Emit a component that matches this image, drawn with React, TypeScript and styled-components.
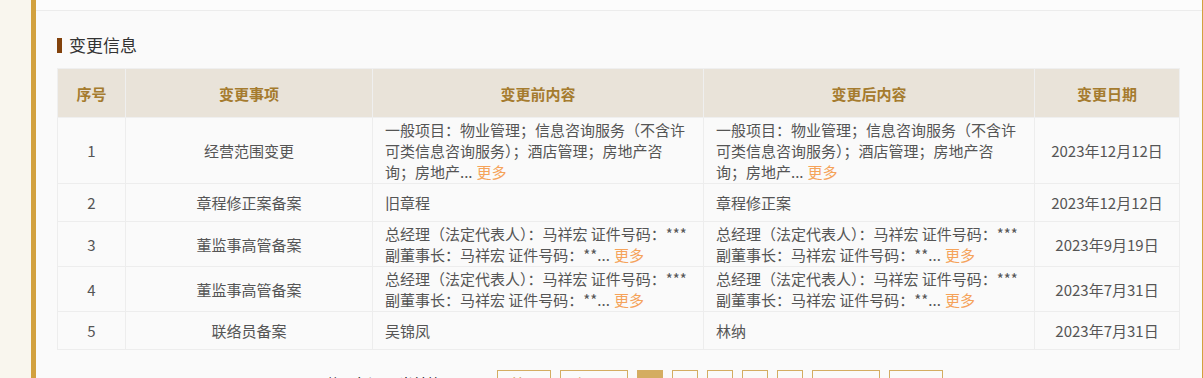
import React from 'react'
import styled, { createGlobalStyle } from 'styled-components'

const GlobalStyle = createGlobalStyle`
  html, body {
    margin: 0;
    padding: 0;
    background: #f9f6ee;
    font-family: "Noto Sans CJK SC", "Noto Sans", sans-serif;
  }
`

const Shell = styled.div`
  padding-left: 31px;
  height: 378px;
  overflow: hidden;
`

const Panel = styled.div`
  height: 100%;
  background: #fafafa;
  border-left: 5px solid #d2a13e;
  border-right: 1px solid #d2a13e;
`

const TopStrip = styled.div`
  height: 10px;
  background: #fcfcfc;
  border-bottom: 1px solid #ececec;
`

const Section = styled.div`
  padding: 26px 22px 0 21px;
`

const Title = styled.div`
  display: flex;
  align-items: center;
  gap: 7px;
  height: 16px;
  font-size: 17px;
  color: #333;
  line-height: 16px;
`

const TitleBar = styled.span`
  width: 5px;
  height: 15px;
  background: #82420c;
`

const Table = styled.table`
  width: 100%;
  margin-top: 15px;
  border-collapse: collapse;
  table-layout: fixed;
  font-size: 15px;
`

const Th = styled.th`
  height: 48px;
  padding: 0;
  background: #e9e3d9;
  border: 1px solid #efefef;
  color: #a57b2e;
  font-weight: bold;
  text-align: center;
`

const Td = styled.td<{ $left?: boolean }>`
  padding: 1px 12px;
  border: 1px solid #ededed;
  color: #555;
  line-height: 21px;
  text-align: ${(p) => (p.$left ? 'left' : 'center')};
  vertical-align: middle;
  height: 35px;
`

const Line = styled.div`
  white-space: nowrap;
`

const More = styled.a`
  color: #f5a35a;
  margin-left: 4px;
  cursor: pointer;
`

const Pager = styled.div`
  display: flex;
  align-items: center;
  justify-content: center;
  gap: 9px;
  margin-top: 20px;
  padding-left: 32px;
  font-size: 14px;
`

const PagerInfo = styled.span`
  color: #111;
  margin-right: 6px;
  white-space: nowrap;
`

const PageButton = styled.button<{ $active?: boolean; $wide?: boolean }>`
  height: 26px;
  min-width: 26px;
  padding: 0 ${(p) => (p.$wide ? '12px' : '0')};
  border: 1px solid #d4ad62;
  background: ${(p) => (p.$active ? '#d4ad62' : 'transparent')};
  color: ${(p) => (p.$active ? '#fff' : '#c9a055')};
  font: inherit;
  font-size: 14px;
  cursor: pointer;
`

interface ChangeRow {
  no: number
  item: string
  before: string[]
  after: string[]
  more?: boolean
  date: string
}

const scopeText = [
  '一般项目：物业管理；信息咨询服务（不含许',
  '可类信息咨询服务）；酒店管理；房地产咨',
  '询；房地产...'
]

const staffText = [
  '总经理（法定代表人）：马祥宏 证件号码：***',
  '副董事长：马祥宏 证件号码：**...'
]

const rows: ChangeRow[] = [
  { no: 1, item: '经营范围变更', before: scopeText, after: scopeText, more: true, date: '2023年12月12日' },
  { no: 2, item: '章程修正案备案', before: ['旧章程'], after: ['章程修正案'], date: '2023年12月12日' },
  { no: 3, item: '董监事高管备案', before: staffText, after: staffText, more: true, date: '2023年9月19日' },
  { no: 4, item: '董监事高管备案', before: staffText, after: staffText, more: true, date: '2023年7月31日' },
  { no: 5, item: '联络员备案', before: ['吴锦凤'], after: ['林纳'], date: '2023年7月31日' }
]

const Content = ({ lines, more }: { lines: string[]; more?: boolean }) => (
  <>
    {lines.map((l, i) => (
      <Line key={i}>
        {l}
        {more && i === lines.length - 1 && <More>更多</More>}
      </Line>
    ))}
  </>
)

const App = () => {
  return (
    <Shell>
      <GlobalStyle />
      <Panel>
        <TopStrip />
        <Section>
          <Title>
            <TitleBar />
            变更信息
          </Title>
          <Table>
            <colgroup>
              <col style={{ width: 68 }} />
              <col style={{ width: 247 }} />
              <col style={{ width: 331 }} />
              <col style={{ width: 331 }} />
              <col />
            </colgroup>
            <thead>
              <tr>
                <Th>序号</Th>
                <Th>变更事项</Th>
                <Th>变更前内容</Th>
                <Th>变更后内容</Th>
                <Th>变更日期</Th>
              </tr>
            </thead>
            <tbody>
              {rows.map((r) => (
                <tr key={r.no}>
                  <Td>{r.no}</Td>
                  <Td>{r.item}</Td>
                  <Td $left><Content lines={r.before} more={r.more} /></Td>
                  <Td $left><Content lines={r.after} more={r.more} /></Td>
                  <Td>{r.date}</Td>
                </tr>
              ))}
            </tbody>
          </Table>
          <Pager>
            <PagerInfo>共 5 条记录 当前第 1/1 页</PagerInfo>
            <PageButton $wide>首页</PageButton>
            <PageButton $wide>上一页</PageButton>
            <PageButton $active>1</PageButton>
            <PageButton>2</PageButton>
            <PageButton>3</PageButton>
            <PageButton>4</PageButton>
            <PageButton>5</PageButton>
            <PageButton $wide>下一页</PageButton>
            <PageButton $wide>尾页</PageButton>
          </Pager>
        </Section>
      </Panel>
    </Shell>
  )
}

export default App
